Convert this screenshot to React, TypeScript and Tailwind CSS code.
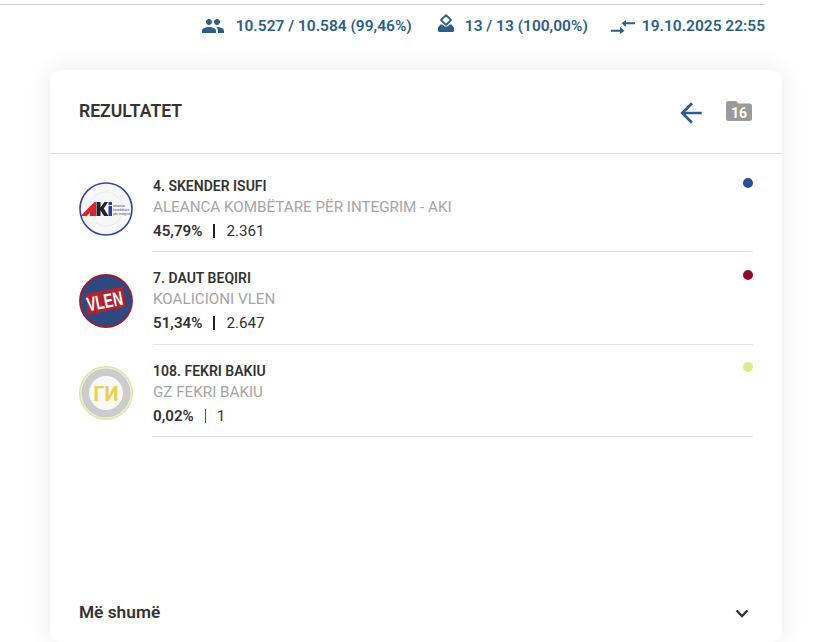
import React from "react";

const AkiLogo = () => (
  <svg viewBox="0 0 54 54" className="w-[54px] h-[54px] shrink-0">
    <circle cx="27" cy="27" r="26" fill="#f7f7f9" stroke="#33489c" strokeWidth="1.6" />
    <circle cx="27" cy="27" r="17" fill="none" stroke="#ebebed" strokeWidth="1" />
    <path d="M1.500 34 L15.500 20 L17 20 L17 34 L11 34 L11 30 L8 34 Z" fill="#e0202a" />
    <path d="M17.500 20 H21.500 V25.500 L25.500 20 H29 L24.800 26.500 L29.500 34 H25 L21.500 28.500 V34 H17.500 Z" fill="#20232c" />
    <rect x="29.500" y="20" width="3.500" height="3" fill="#2a3f9c" />
    <rect x="29.500" y="24" width="3.500" height="10" fill="#2a3f9c" />
    <text x="34" y="24.500" fontSize="3.400" fill="#555" fontFamily="Roboto, sans-serif">aleanca</text>
    <text x="34" y="28.500" fontSize="3.400" fill="#555" fontFamily="Roboto, sans-serif">kombëtare</text>
    <text x="34" y="32.500" fontSize="3.400" fill="#555" fontFamily="Roboto, sans-serif">për integrim</text>
  </svg>
);

const VlenLogo = () => (
  <svg viewBox="0 0 54 54" className="w-[54px] h-[54px] shrink-0">
    <circle cx="27" cy="27" r="26" fill="#2b4a80" stroke="#a01a35" strokeWidth="1.800" />
    <path d="M7 20 L44.500 12.500 L46.500 33 L8.500 41 Z" fill="#b5202a" />
    <text
      x="0"
      y="0"
      textAnchor="middle"
      fontSize="20"
      fontWeight="700"
      fill="#fff"
      fontFamily="'Liberation Sans', sans-serif"
      transform="translate(27 34) rotate(-11) scale(0.68 1)"
    >
      VLEN
    </text>
  </svg>
);

const GiLogo = () => (
  <svg viewBox="0 0 54 54" className="w-[54px] h-[54px] shrink-0">
    <circle cx="27" cy="27" r="27" fill="#dfe89a" />
    <circle cx="27" cy="27" r="25.500" fill="#f1f1ee" />
    <circle cx="27" cy="27" r="24.500" fill="#cccccc" />
    <circle cx="27" cy="27" r="17" fill="#f8f8f6" />
    <text x="27" y="34.500" textAnchor="middle" fontSize="20" fontWeight="700" fill="#ecd04a" fontFamily="Roboto, 'Noto Sans', sans-serif">ГИ</text>
  </svg>
);

const rows = [
  { name: "4. SKENDER ISUFI", party: "ALEANCA KOMBËTARE PËR INTEGRIM - AKI", pct: "45,79%", votes: "2.361", dot: "bg-[#2f4a9c]", Logo: AkiLogo, bar: "bg-[#222222] w-[2px]" },
  { name: "7. DAUT BEQIRI", party: "KOALICIONI VLEN", pct: "51,34%", votes: "2.647", dot: "bg-[#8c0a2a]", Logo: VlenLogo, bar: "bg-[#222222] w-[2px]" },
  { name: "108. FEKRI BAKIU", party: "GZ FEKRI BAKIU", pct: "0,02%", votes: "1", dot: "bg-[#dfe88f]", Logo: GiLogo, bar: "bg-[#555555] w-px" },
];

export default function App() {
  return (
    <div className="w-[820px] h-[642px] overflow-hidden bg-white font-['Roboto',sans-serif] flex flex-col">
      <div className="h-[5px] w-[764px] border-b border-[#cfcfcf]" />
      <div className="h-[42px] w-[765px] flex items-center justify-end text-[15.5px] font-semibold text-[#2b5f88]">
        <svg viewBox="0 0 24 24" className="w-[24px] h-[24px] fill-[#2b5f88] -mt-[1px]">
          <path d="M16 11c1.660 0 2.990-1.340 2.990-3S17.660 5 16 5s-3 1.340-3 3 1.340 3 3 3zm-8 0c1.660 0 2.990-1.340 2.990-3S9.660 5 8 5 5 6.340 5 8s1.340 3 3 3zm0 2c-2.330 0-7 1.170-7 3.500V19h14v-2.500C15 14.170 10.330 13 8 13zm8 0c-.290 0-.620.020-.970.050 1.160.840 1.970 1.970 1.970 3.450V19h6v-2.500c0-2.330-4.670-3.500-7-3.500z" />
        </svg>
        <span className="ml-[11px] mt-[1px]">10.527 / 10.584 (99,46%)</span>
        <svg viewBox="0 0 16 18" className="ml-[26px] w-[16px] h-[18px] -mt-[6px]">
          <path d="M8 1.200 13 6 8 10.800 3 6Z" fill="none" stroke="#2b5f88" strokeWidth="1.800" strokeLinejoin="round" />
          <path d="M2.500 10.500H4.500L6.500 12.500H9.500L11.500 10.500H13.500L16 13.500V16.500A1.500 1.500 0 0 1 14.500 18H1.500A1.500 1.500 0 0 1 0 16.500V13.500Z" fill="#2b5f88" />
        </svg>
        <span className="ml-[11px] mt-[1px]">13 / 13 (100,00%)</span>
        <svg viewBox="0 0 24 14" className="ml-[23px] w-[24px] h-[14px] mt-[1px] fill-[#2b5f88]">
          <path d="M0 9.800H9V7L13.500 10.800 9 14V11.800H0Z" />
          <path d="M24 2.200H15V0L10.500 3.200 15 7V4.200H24Z" />
        </svg>
        <span className="ml-[7px] mt-[1px]">19.10.2025 22:55</span>
      </div>
      <div className="mt-[23px] ml-[50px] w-[732px] h-[572px] shrink-0 bg-white rounded-[10px] shadow-[0_0_24px_rgba(0,0,0,0.09)] flex flex-col">
        <div className="h-[84px] shrink-0 border-b border-[#dedede] pl-[29px] pr-[30px] flex items-center justify-between">
          <span className="text-[17.6px] font-semibold text-[#333333]">REZULTATET</span>
          <div className="flex items-center gap-[19px]">
            <svg viewBox="0 0 24 24" className="w-[32px] h-[32px] fill-[#2b5f88] mt-[2px]">
              <path d="M20 11H7.830l5.590-5.590L12 4l-8 8 8 8 1.410-1.410L7.830 13H20v-2z" />
            </svg>
            <div className="relative w-[26px] h-[20px] -mt-[2px]">
              <svg viewBox="0 0 26 20" className="absolute inset-0 w-[26px] h-[20px] fill-[#9b9b9b]">
                <path d="M2.500 0H10l2.500 2.500h11A2.500 2.500 0 0 1 26 5V17.500A2.500 2.500 0 0 1 23.500 20H2.500A2.500 2.500 0 0 1 0 17.500V2.500A2.500 2.500 0 0 1 2.500 0z" />
              </svg>
              <span className="absolute left-0 right-0 top-[5px] text-center text-[14px] leading-[14px] font-bold text-white">16</span>
            </div>
          </div>
        </div>
        <div className="pl-[29px] pr-[29px] pt-[20px] flex flex-col grow">
          {rows.map((r) => (
            <div key={r.name} className="flex h-[92.4px] shrink-0">
              <div className="w-[74px] pt-[7.6px] shrink-0">
                <r.Logo />
              </div>
              <div className="grow h-[78.2px] border-b border-[#e4e4e4] relative">
                <div className="text-[14px] leading-[16px] font-semibold text-[#333333] mt-[4px]">{r.name}</div>
                <div className="text-[15.2px] leading-[18px] text-[#a6a6a6] mt-[4px]">{r.party}</div>
                <div className="flex items-center text-[15.2px] leading-[18px] text-[#333333] mt-[6px]">
                  <span className="font-semibold">{r.pct}</span>
                  <span className={`inline-block h-[14px] mx-[11px] ${r.bar}`} />
                  <span>{r.votes}</span>
                </div>
                <span className={`absolute right-0 top-[3.6px] w-[10px] h-[10px] rounded-full ${r.dot}`} />
              </div>
            </div>
          ))}
          <div className="mt-auto h-[58px] flex items-center justify-between">
            <span className="text-[17.3px] font-semibold text-[#333333]">Më shumë</span>
            <svg viewBox="0 0 24 24" className="w-[24px] h-[24px] fill-none stroke-[#333333] stroke-[2.4] mr-[-1px]">
              <path d="M6.500 9.500 12 15l5.500-5.500" />
            </svg>
          </div>
        </div>
      </div>
    </div>
  );
}
